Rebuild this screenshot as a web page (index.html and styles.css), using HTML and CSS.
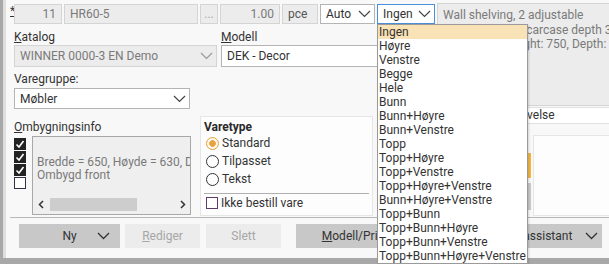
FILE: index.html
```html
<!DOCTYPE html>
<html lang="no">
<head>
  <meta charset="UTF-8">
  <title>Varelinje</title>
  <link rel="stylesheet" href="styles.css">
</head>
<body>
  <div class="window">
    <div class="main">
      <!-- Left side: line fields, catalog, group, rebuild info -->
      <div class="left">
        <div class="cut-row"></div>
        <div class="line-row">
          <span class="star">*</span>
          <div class="cell num w-pos">11</div>
          <div class="cell w-code">HR60-5</div>
          <div class="cell w-dots">...</div>
          <div class="cell num w-qty">1.00</div>
          <div class="cell w-unit">pce</div>
          <div class="select w-auto">Auto
            <svg width="13" height="8" viewBox="0 0 13 8"><polyline points="1,1 6.5,6.5 12,1" fill="none" stroke="#444" stroke-width="1.2"/></svg>
          </div>
          <div class="select focus w-hand">Ingen
            <svg width="13" height="8" viewBox="0 0 13 8"><polyline points="1,1 6.5,6.5 12,1" fill="none" stroke="#444" stroke-width="1.2"/></svg>
          </div>
        </div>

        <div class="fields">
          <div class="field">
            <div class="label"><u>K</u>atalog</div>
            <div class="select disabled control w-cat">WINNER 0000-3 EN Demo
              <svg width="13" height="8" viewBox="0 0 13 8"><polyline points="1,1 6.5,6.5 12,1" fill="none" stroke="#999" stroke-width="1.2"/></svg>
            </div>
          </div>
          <div class="field">
            <div class="label"><u>M</u>odell</div>
            <div class="select control w-model">DEK - Decor</div>
          </div>
        </div>

        <div class="group-field">
          <div class="label">Vare<u>g</u>ruppe:</div>
          <div class="select w-group">Møbler
            <svg width="13" height="8" viewBox="0 0 13 8"><polyline points="1,1 6.5,6.5 12,1" fill="none" stroke="#444" stroke-width="1.2"/></svg>
          </div>
        </div>

        <div class="lower">
          <div class="ombyg">
            <div class="label"><u>O</u>mbygningsinfo</div>
            <div class="ombyg-body">
              <div class="checks">
                <span class="box checked"><svg width="10" height="10" viewBox="0 0 10 10"><polyline points="1.5,5.5 4,8 8.5,2" fill="none" stroke="#fff" stroke-width="1.6"/></svg></span>
                <span class="box checked"><svg width="10" height="10" viewBox="0 0 10 10"><polyline points="1.5,5.5 4,8 8.5,2" fill="none" stroke="#fff" stroke-width="1.6"/></svg></span>
                <span class="box checked"><svg width="10" height="10" viewBox="0 0 10 10"><polyline points="1.5,5.5 4,8 8.5,2" fill="none" stroke="#fff" stroke-width="1.6"/></svg></span>
                <span class="box"></span>
              </div>
              <div class="info">
                <div class="info-text">
                  <div>Bredde = 650, Høyde = 630, D</div>
                  <div>Ombygd front</div>
                </div>
                <div class="hscroll">
                  <svg width="6" height="9" viewBox="0 0 6 9"><polyline points="5,1 1.5,4.5 5,8" fill="none" stroke="#333" stroke-width="1.5"/></svg>
                  <span class="thumb"></span>
                  <svg class="arrow-right" width="6" height="9" viewBox="0 0 6 9"><polyline points="1,1 4.5,4.5 1,8" fill="none" stroke="#333" stroke-width="1.5"/></svg>
                </div>
              </div>
            </div>
          </div>

          <div class="varetype">
            <div class="title">Varetype</div>
            <div class="radio-row"><span class="radio on"></span>Standard</div>
            <div class="radio-row"><span class="radio"></span>Tilpasset</div>
            <div class="radio-row"><span class="radio"></span>Tekst</div>
            <div class="rule"></div>
            <div class="check-row"><span class="box plain"></span>Ikke bestill vare</div>
          </div>
        </div>
      </div>

      <!-- Right side: description and preview -->
      <div class="right">
        <div class="desc">
          <div>Wall shelving, 2 adjustable</div>
          <div>shelves, 16mm carcase depth 300</div>
          <div>Width: 600, Height: 750, Depth: 300</div>
        </div>
        <div class="desc-row">Beskrivelse</div>
        <div class="side">
          <div class="tools">
            <div class="tool orange"></div>
            <div class="tool grey"></div>
          </div>
          <div class="preview"></div>
        </div>
      </div>
    </div>

    <div class="buttons">
      <div class="btn w-new"><span></span><span class="btn-text">Ny</span>
        <svg width="13" height="8" viewBox="0 0 13 8"><polyline points="1,1 6.5,6.5 12,1" fill="none" stroke="#333" stroke-width="1.3"/></svg>
      </div>
      <div class="btn plain off w-small"><span><u>R</u>ediger</span></div>
      <div class="btn plain off w-small w-delete">Slett</div>
      <div class="btn plain w-price"><span><u>M</u>odell/Priser</span></div>
      <div class="btn w-assist"><span></span><span class="btn-text">Innredningsassistant</span>
        <svg width="13" height="8" viewBox="0 0 13 8"><polyline points="1,1 6.5,6.5 12,1" fill="none" stroke="#333" stroke-width="1.3"/></svg>
      </div>
    </div>

    <!-- Open dropdown for the hand column -->
    <ul class="dropdown">
      <li class="active">Ingen</li>
      <li>Høyre</li>
      <li>Venstre</li>
      <li>Begge</li>
      <li>Hele</li>
      <li>Bunn</li>
      <li>Bunn+Høyre</li>
      <li>Bunn+Venstre</li>
      <li>Topp</li>
      <li>Topp+Høyre</li>
      <li>Topp+Venstre</li>
      <li>Topp+Høyre+Venstre</li>
      <li>Bunn+Høyre+Venstre</li>
      <li>Topp+Bunn</li>
      <li>Topp+Bunn+Høyre</li>
      <li>Topp+Bunn+Venstre</li>
      <li>Topp+Bunn+Høyre+Venstre</li>
    </ul>
  </div>
</body>
</html>
```

FILE: styles.css
```css
body {
  margin: 0;
  font-family: Roboto, "Liberation Sans", sans-serif;
  font-size: 12px;
  color: #333333;
  background-color: #f8f8f8;
  overflow: hidden;
}

.window {
  position: relative;
  width: 609px;
  height: 264px;
  box-sizing: border-box;
  border-left: 3px solid #a8a8a8;
  border-bottom: 6px solid #a8a8a8;
  padding-left: 7px;
  box-shadow: inset 3px 0 0 #dedede;
  background-color: #f8f8f8;
}

.main {
  display: flex;
  height: 217px;
}

.left {
  width: 427px;
  flex-shrink: 0;
}

.right {
  flex: 1;
  display: flex;
  flex-direction: column;
  min-width: 0;
  overflow: hidden;
}

.cut-row {
  height: 3px;
}

/* Order line */
.line-row {
  display: flex;
  gap: 2px;
  height: 20px;
  margin-top: 1px;
}

.star {
  width: 2px;
  line-height: 14px;
  text-decoration: underline;
}

.cell {
  box-sizing: border-box;
  display: flex;
  align-items: center;
  padding: 0 5px;
  border: 1px solid #d4d4d4;
  background-color: #ececec;
  color: #7a7a7a;
  white-space: nowrap;
}

.num {
  justify-content: flex-end;
}

.w-pos { width: 48px; }
.w-code { width: 134px; }
.w-dots { width: 18px; padding: 0; justify-content: center; color: #aaaaaa; }
.w-qty { width: 60px; }
.w-unit { width: 36px; color: #555555; }

.select {
  box-sizing: border-box;
  display: flex;
  align-items: center;
  justify-content: space-between;
  padding: 0 3px 0 5px;
  border: 1px solid #b4b4b4;
  background-color: #ffffff;
  color: #333333;
  white-space: nowrap;
}

.focus {
  border-color: #4a90d9;
}

.w-auto { width: 55px; }
.w-hand { width: 58px; }

.disabled {
  border-color: #d4d4d4;
  background-color: #ececec;
  color: #7a7a7a;
}

/* Catalog and model */
.fields {
  display: flex;
  gap: 4px;
  padding-left: 4px;
  margin-top: 6px;
}

.field {
  display: flex;
  flex-direction: column;
}

.label {
  height: 15px;
  line-height: 15px;
}

.control {
  height: 22px;
}

.w-cat { width: 203px; }
.w-model { width: 214px; }

.group-field {
  padding-left: 4px;
  margin-top: 4px;
}

.group-field .label {
  height: 17px;
  line-height: 17px;
}

.w-group {
  width: 176px;
  height: 21px;
}

/* Rebuild info and item type */
.lower {
  display: flex;
  gap: 9px;
  padding-left: 4px;
  margin-top: 7px;
}

.ombyg {
  width: 177px;
}

.ombyg .label {
  height: 17px;
  line-height: 17px;
  margin-top: 3px;
}

.ombyg-body {
  display: flex;
  gap: 6px;
}

.checks {
  display: flex;
  flex-direction: column;
  gap: 1px;
  padding-top: 2px;
}

.box {
  box-sizing: border-box;
  display: flex;
  align-items: center;
  justify-content: center;
  width: 12px;
  height: 12px;
  border: 1px solid #3a2f48;
  background-color: #ffffff;
}

.box.checked {
  background-color: #222222;
  border-color: #222222;
}

.box.plain {
  border-color: #5b3c6b;
}

.info {
  box-sizing: border-box;
  display: flex;
  flex-direction: column;
  width: 159px;
  height: 79px;
  border: 1px solid #a8a8a8;
  background-color: #efefef;
  color: #7a7a7a;
  overflow: hidden;
}

.info-text {
  flex: 1;
  display: flex;
  flex-direction: column;
  justify-content: center;
  padding: 4px 0 0 4px;
  line-height: 13px;
  white-space: nowrap;
  overflow: hidden;
}

.hscroll {
  display: flex;
  align-items: center;
  gap: 6px;
  height: 17px;
  padding: 0 4px 1px 5px;
}

.thumb {
  width: 87px;
  height: 13px;
  background-color: #cdcdcd;
}

.arrow-right {
  margin-left: auto;
}

.varetype {
  box-sizing: border-box;
  width: 173px;
  height: 100px;
  padding: 3px 3px 0 3px;
  border: 1px solid #e6e6e6;
  background-color: #fdfdfd;
}

.title {
  height: 14px;
  line-height: 14px;
  font-weight: bold;
  color: #2a2a2a;
}

.radio-row,
.check-row {
  display: flex;
  align-items: center;
  gap: 3px;
  height: 18px;
  padding-left: 2px;
}

.check-row {
  height: 17px;
}

.radio {
  box-sizing: border-box;
  width: 13px;
  height: 13px;
  border: 1px solid #333333;
  border-radius: 50%;
  background-color: #ffffff;
}

.radio.on {
  border-color: #e3a23c;
  background: radial-gradient(circle, #e8a33d 0, #e8a33d 3px, #fff8ec 3.6px);
}

.rule {
  height: 1px;
  margin-top: 5px;
  background-color: #b0b0b0;
}

/* Description column */
.desc {
  box-sizing: border-box;
  height: 103px;
  margin-top: 3px;
  padding: 4px 0 0 5px;
  border: 1px solid #d4d4d4;
  border-right: none;
  background-color: #ececec;
  color: #7a7a7a;
  line-height: 14.5px;
  white-space: nowrap;
  overflow: hidden;
}

.desc-row {
  box-sizing: border-box;
  height: 17px;
  margin-top: 1px;
  padding-left: 57px;
  border-top: 1px solid #e0e0e0;
  border-bottom: 1px solid #e0e0e0;
  background-color: #ffffff;
  line-height: 15px;
}

.side {
  flex: 1;
  display: flex;
  gap: 2px;
}

.tools {
  width: 94px;
  display: flex;
  flex-direction: column;
  gap: 5px;
  padding-top: 29px;
}

.orange {
  height: 25px;
  background-color: #f4b841;
}

.grey {
  height: 27px;
  background-color: #cacaca;
}

.preview {
  flex: 1;
  margin: 11px 0 1px 0;
  border: 1px solid #e6e6e6;
  border-right: none;
  background-color: #fdfdfd;
}

/* Bottom buttons */
.buttons {
  display: flex;
  gap: 5px;
  padding: 6px 0 0 9px;
  border-top: 1px solid #b8b8b8;
}

.btn {
  box-sizing: border-box;
  display: grid;
  grid-template-columns: 13px 1fr 13px;
  align-items: center;
  height: 24px;
  padding: 0 10px;
  background-color: #c8c8c8;
  color: #333333;
  white-space: nowrap;
}

.btn-text {
  text-align: center;
}

.btn.plain {
  display: flex;
  justify-content: center;
}

.btn.off {
  background-color: #ececec;
  color: #a6a6a6;
}

.w-new { width: 101px; }
.w-small { width: 75px; }
.w-delete { margin-left: 1px; }
.w-price { width: 124px; margin-left: 10px; }
.w-assist { width: 177px; padding: 0 4px 0 10px; }

/* Dropdown list */
.dropdown {
  position: absolute;
  left: 374px;
  top: 24px;
  z-index: 2;
  box-sizing: border-box;
  width: 151px;
  margin: 0;
  padding: 0;
  list-style: none;
  border: 1px solid #9a9a9a;
  background-color: #ffffff;
  box-shadow: 1px 1px 2px rgba(0, 0, 0, 0.15);
}

.dropdown li {
  height: 14px;
  line-height: 14px;
  padding-left: 1px;
  white-space: nowrap;
}

.dropdown .active {
  background-color: #f9e2b6;
}
```
